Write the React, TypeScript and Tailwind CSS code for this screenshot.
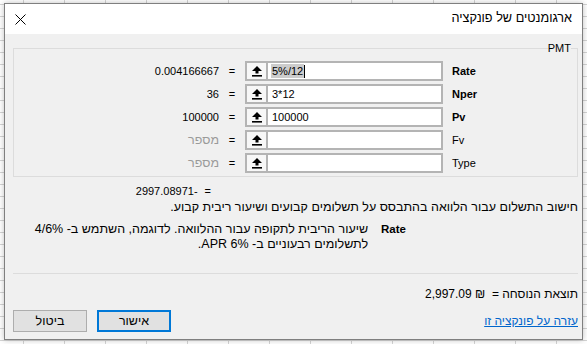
import React from "react";

const args = [
  { value: "0.004166667", name: "Rate", bold: true, text: "5%/12", selected: true },
  { value: "36", name: "Nper", bold: true, text: "3*12" },
  { value: "100000", name: "Pv", bold: true, text: "100000" },
  { value: "מספר", name: "Fv", bold: false, text: "", hint: true },
  { value: "מספר", name: "Type", bold: false, text: "", hint: true },
];

function RefButton() {
  return (
    <div className="w-[21px] h-full flex items-center justify-center bg-[#f7f7f7] border-r-2 border-[#b4b4b4]">
      <svg width="10" height="11" viewBox="0 0 10 11">
        <polygon points="5,0 0,5 3.5,5 3.5,7.5 6.5,7.5 6.5,5 10,5" fill="#000" />
        <rect x="0" y="9" width="10" height="1.6" fill="#000" />
      </svg>
    </div>
  );
}

export default function App() {
  return (
    <div className="w-[587px] h-[344px] overflow-hidden bg-white bg-[linear-gradient(to_right,#d4d4d4_1px,transparent_1px),linear-gradient(to_bottom,#d4d4d4_1px,transparent_1px)] bg-[size:41px_12px] bg-[position:23px_4px] pt-[3px] pl-[4px] font-['Liberation_Sans','DejaVu_Sans',sans-serif] text-[11px] text-black">
      <div
        dir="rtl"
        className="w-[579px] h-[337px] border border-[#7f7f7f] bg-[#f0f0f0] shadow-[0_0_6px_rgba(0,0,0,0.25)] flex flex-col"
      >
        {/* Title bar */}
        <div className="h-[30px] bg-white flex items-center justify-between pr-[10px] pl-[10px] shrink-0">
          <span className="text-[12.7px]">ארגומנטים של פונקציה</span>
          <svg width="11" height="11" viewBox="0 0 11 11" className="mt-[1px]">
            <path d="M0.5 0.5 L10.5 10.5 M10.5 0.5 L0.5 10.5" stroke="#000" strokeWidth="1" />
          </svg>
        </div>

        <div className="flex-1 pl-[8px] pr-[4px] pt-[7px] flex flex-col">
          {/* Group box */}
          <fieldset className="border border-[#dcdcdc] p-0 m-0">
            <legend className="mr-[6px] px-0 leading-[14px]">PMT</legend>
            <div dir="ltr" className="pt-[6px] pb-[3px] flex flex-col gap-[3px]">
              {args.map((a) => (
                <div key={a.name} className="flex items-center h-[20px]">
                  <div
                    dir={a.hint ? "rtl" : "ltr"}
                    className={`w-[205px] text-right ${a.hint ? "text-[#9a9a9a] text-left text-[12.5px]" : ""}`}
                  >
                    {a.value}
                  </div>
                  <div className="w-[26px] text-center">=</div>
                  <div className="w-[198px] h-[20px] border-2 border-[#b4b4b4] flex bg-white">
                    <RefButton />
                    <div className="flex-1 flex items-center pl-[3px]">
                      {a.selected ? (
                        <>
                          <span className="bg-[#cccccc] leading-[14px] px-[1px]">{a.text}</span>
                          <span className="w-[1px] h-[13px] bg-black"></span>
                        </>
                      ) : (
                        <span className="pl-[1px]">{a.text}</span>
                      )}
                    </div>
                  </div>
                  <div className={`ml-[9px] ${a.bold ? "font-bold" : ""}`}>{a.name}</div>
                </div>
              ))}
            </div>
          </fieldset>

          {/* Result */}
          <div className="mt-[7px] leading-[14px] flex mr-[367px]">
            <span>=</span>
            <span className="mr-[7px]">-2997.08971</span>
          </div>

          <div className="mt-[2px] leading-[15px] text-[12.5px]">
            חישוב התשלום עבור הלוואה בהתבסס על תשלומים קבועים ושיעור ריבית קבוע.
          </div>

          <div className="mt-[7px] flex leading-[15px]">
            <div dir="ltr" className="mr-[172px] font-bold text-[11.5px]">Rate</div>
            <div className="mr-[13px] w-[345px] text-[12.5px]">
              שיעור הריבית לתקופה עבור ההלוואה. לדוגמה, השתמש ב- 4/6%
              <br />
              לתשלומים רבעוניים ב- APR 6%.
            </div>
          </div>

          <div className="mt-[21px] h-[1px] bg-[#dcdcdc]"></div>

          <div className="mt-[13px] leading-[14px] text-[12px]">תוצאת הנוסחה =&nbsp;&nbsp;₪ 2,997.09</div>

          <div className="mt-[9px] flex items-center justify-between">
            <a className="text-[#0066cc] underline cursor-pointer text-[12px]">עזרה על פונקציה זו</a>
            <div className="flex gap-[10px]">
              <button className="w-[74px] h-[22px] bg-[#e1e1e1] border-2 border-[#0078d7] text-[12.5px]">
                אישור
              </button>
              <button className="w-[74px] h-[22px] bg-[#e1e1e1] border border-[#adadad] text-[12.5px]">
                ביטול
              </button>
            </div>
          </div>
        </div>
      </div>
    </div>
  );
}
